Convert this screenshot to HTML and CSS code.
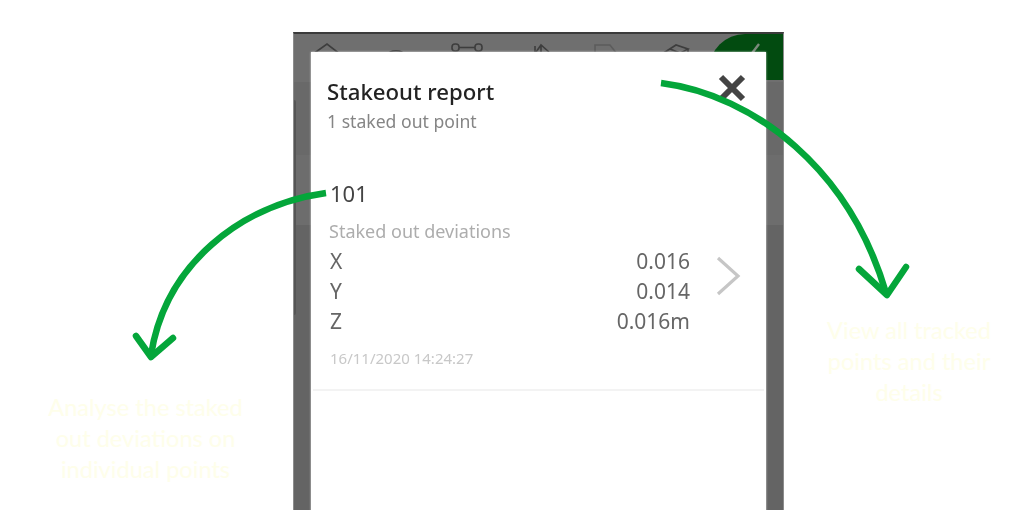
FILE: index.html
```html
<!DOCTYPE html>
<html lang="en">
<head>
    <meta charset="UTF-8">
    <meta name="viewport" content="width=device-width, initial-scale=1.0">
    <title>Stakeout report</title>
    <link rel="stylesheet" href="styles.css">
</head>
<body>

    <div class="slide">
        <div class="side side-left">
            <p class="caption">Analyse the staked out deviations on individual points</p>
        </div>

        <div class="phone">
            <!-- Toolbar behind the dialog -->
            <div class="toolbar">
                <svg class="toolbar-icons" width="491" height="48" viewBox="0 0 491 48" fill="none" stroke="#3d3d3d" stroke-width="1.6">
                    <path d="M19 20 L33 10 L46 20 L42 30 M24 30 L19 20"/>
                    <path d="M92 22 a11 9 0 0 1 20 0"/>
                    <rect x="158" y="10" width="7" height="7" rx="3"/>
                    <rect x="181" y="10" width="7" height="7" rx="3"/>
                    <path d="M165 13.5 H181"/>
                    <path d="M241 12 V26 M247 26 V12 M242 18 L247 11 L255 18"/>
                    <path d="M301 22 V11 H316 L323 20" stroke="#5c5c5c"/>
                    <path d="M368 20 L382 11 L394 15 L381 22 Z M376 15 L386 19 M368 20 V28 M394 15 V28"/>
                </svg>
                <div class="done">
                    <svg width="30" height="30" viewBox="0 0 30 30" fill="none" stroke="#7c8a7c" stroke-width="2.4">
                        <path d="M12 29 L28 8"/>
                    </svg>
                </div>
            </div>
            <div class="band band-a"></div>
            <div class="band band-b"></div>
            <div class="band band-c"></div>
            <div class="side-panel"></div>

            <!-- Report dialog -->
            <div class="dialog">
                <div class="dialog-head">
                    <div>
                        <h1>Stakeout report</h1>
                        <p class="sub">1 staked out point</p>
                    </div>
                    <svg class="close" width="30" height="30" viewBox="0 0 30 30" fill="none" stroke="#444" stroke-width="6">
                        <path d="M4 4 L26 26 M26 4 L4 26"/>
                    </svg>
                </div>

                <div class="report-item">
                    <div class="point-name">101</div>
                    <div class="deviations-title">Staked out deviations</div>
                    <div class="deviations">
                        <div class="rows">
                            <div class="row"><span>X</span><span>0.016</span></div>
                            <div class="row"><span>Y</span><span>0.014</span></div>
                            <div class="row"><span>Z</span><span>0.016m</span></div>
                        </div>
                        <svg class="chevron" width="26" height="40" viewBox="0 0 26 40" fill="none" stroke="#c6c6c6" stroke-width="3.2">
                            <path d="M3 2 L23 20 L3 38"/>
                        </svg>
                    </div>
                    <div class="stamp">16/11/2020 14:24:27</div>
                </div>
            </div>
        </div>

        <div class="side side-right">
            <p class="caption">View all tracked points and their details</p>
        </div>
    </div>

    <!-- Green arrows drawn over everything -->
    <svg class="arrows" width="1024" height="510" viewBox="0 0 1024 510" fill="none" stroke="#04a63a" stroke-width="6.5" stroke-linecap="round" stroke-linejoin="round">
        <path stroke-linecap="butt" d="M661 83 C755 95 850 170 886 293"/>
        <path d="M859 269 L887 295 L906 267"/>
        <path stroke-linecap="butt" d="M326 193 C240 205 165 265 151 355"/>
        <path d="M136 336 L151 357 L173 338"/>
    </svg>

</body>
</html>
```

FILE: styles.css
```css
body {
    margin: 0;
    background-color: #fff;
    font-family: "Noto Sans", "Open Sans", sans-serif;
    overflow: hidden;
}

.slide {
    display: grid;
    grid-template-columns: 293px 491px 240px;
    height: 510px;
}

/* Captions either side of the phone */
.side {
    text-align: center;
}

.side-left {
    padding: 392px 48px 0 46px;
}

.side-right {
    padding: 315px 30px 0 40px;
}

.caption {
    margin: 0;
    font-family: Lato, sans-serif;
    font-size: 23.6px;
    line-height: 31px;
    color: #fefeea;
}

/* Phone screen, dimmed */
.phone {
    position: relative;
    margin-top: 32px;
    background-color: #666;
    border-top: 2px solid #3b3b3b;
    border-left: 1px solid #8c8c8c;
    border-right: 1px solid #8c8c8c;
    overflow: hidden;
}

.toolbar {
    position: relative;
    height: 48px;
    background-color: #6f6f6f;
}

.toolbar-icons {
    display: block;
    filter: blur(0.5px);
}

.done {
    position: absolute;
    top: 0;
    right: 0;
    width: 74px;
    height: 46px;
    display: flex;
    justify-content: center;
    padding-top: 2px;
    box-sizing: border-box;
    background-color: #024b10;
    border-radius: 36px 0 0 0;
}

.band-a {
    height: 73px;
    background-color: #696969;
}

.band-b {
    height: 70px;
    background-color: #6d6d6d;
}

.band-c {
    height: 285px;
    background-color: #646464;
}

.side-panel {
    position: absolute;
    top: 66px;
    left: 0;
    width: 2px;
    height: 215px;
    background-color: #555;
    border-radius: 0 4px 4px 0;
}

/* Dialog */
.dialog {
    position: absolute;
    top: 18px;
    left: 17px;
    width: 455px;
    height: 470px;
    background-color: #fff;
    box-shadow: 0 0 2px rgba(255, 255, 255, 0.8);
}

.dialog-head {
    display: flex;
    justify-content: space-between;
    padding: 25px 19px 0 16px;
    height: 83px;
    filter: blur(0.35px);
}

.dialog-head h1 {
    margin: 0;
    font-size: 22.2px;
    line-height: 30px;
    font-weight: 500;
    color: #222;
}

.sub {
    margin: 0;
    padding-top: 1px;
    font-size: 17.6px;
    line-height: 26px;
    color: #858585;
}

.close {
    margin-top: -4px;
}

.report-item {
    margin: 0 2px;
    padding: 0 0 0 17px;
    height: 231px;
    box-sizing: border-box;
    border-bottom: 2px solid #f3f3f3;
}

.point-name {
    font-size: 22px;
    line-height: 30px;
    padding-top: 18px;
    color: #444;
    filter: blur(0.35px);
}

.deviations-title {
    margin-top: 11px;
    margin-left: -1px;
    font-size: 18px;
    line-height: 24px;
    color: #adadad;
    filter: blur(0.35px);
}

.deviations {
    display: flex;
    align-items: center;
    margin-top: 3px;
    filter: blur(0.35px);
}

.rows {
    width: 360px;
}

.row {
    display: flex;
    justify-content: space-between;
    font-size: 21px;
    line-height: 30px;
    color: #666;
}

.chevron {
    margin-left: 25px;
    margin-bottom: 30px;
}

.stamp {
    margin-top: 12px;
    font-size: 15px;
    line-height: 20px;
    color: #c8c8c8;
    filter: blur(0.35px);
}

.arrows {
    position: absolute;
    top: 0;
    left: 0;
}
```
